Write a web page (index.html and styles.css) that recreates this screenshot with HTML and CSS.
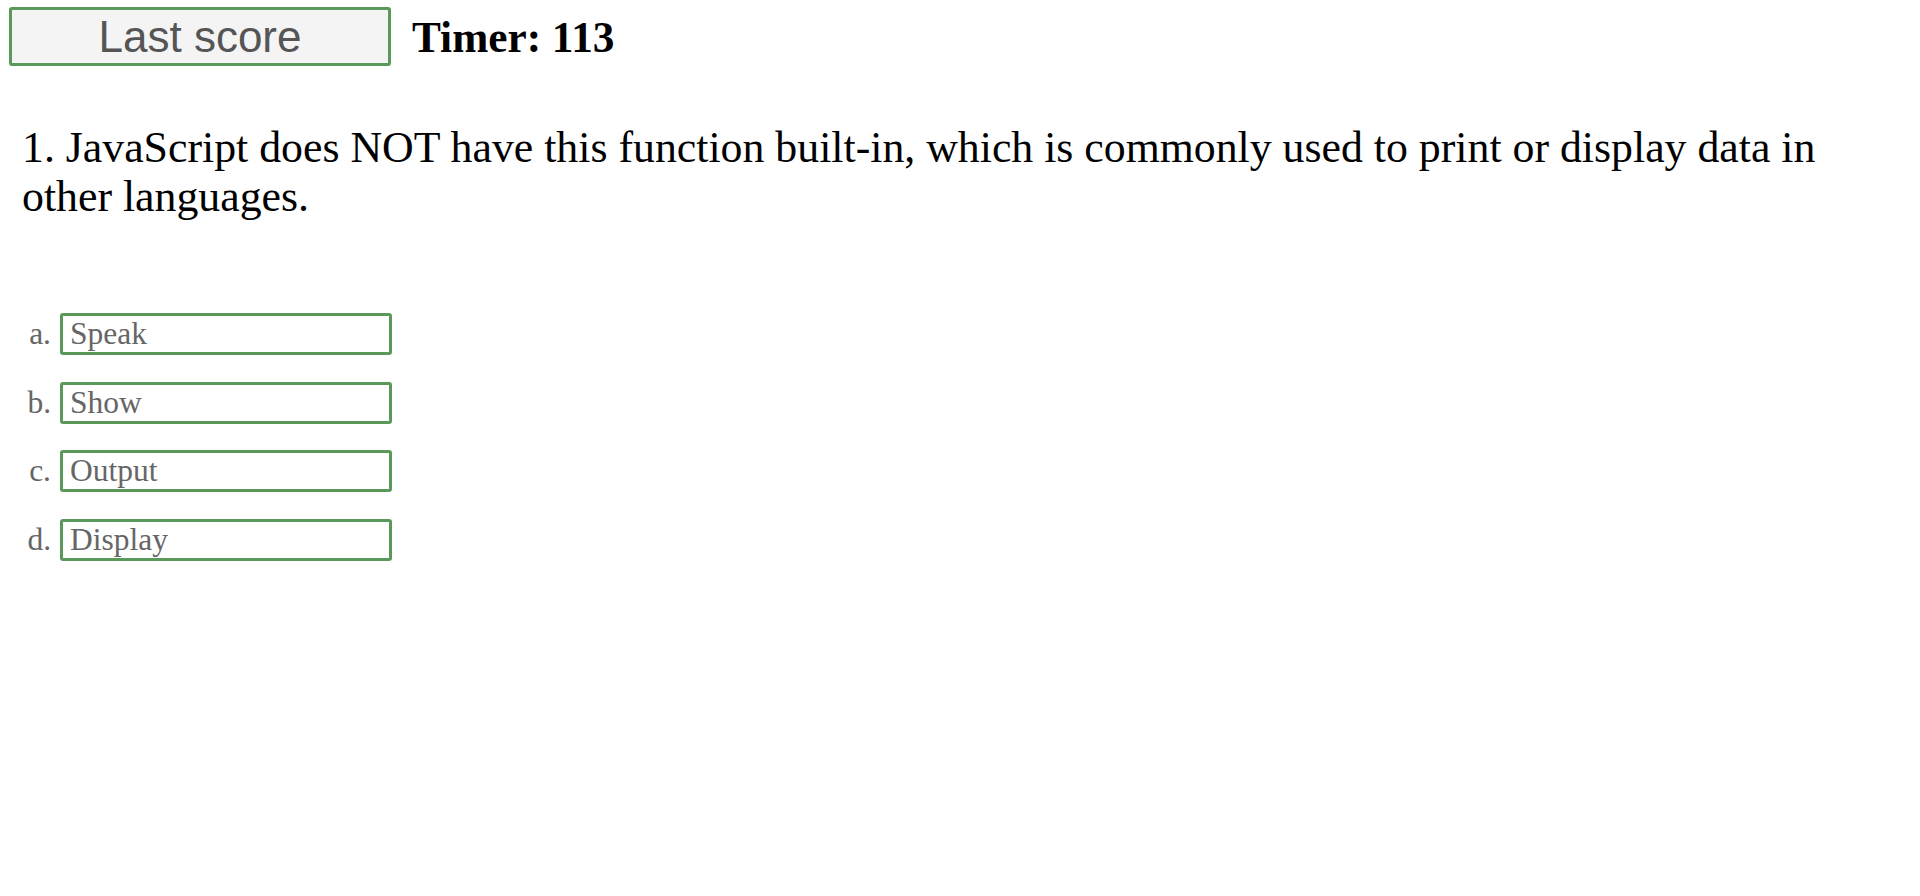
FILE: index.html
```html
<!DOCTYPE html>
<html lang="en">
<head>
<meta charset="utf-8">
<title>Quiz</title>
<link rel="stylesheet" href="styles.css">
</head>
<body>
<header class="header">
  <button class="score-btn" type="button">Last score</button>
  <div class="timer">Timer: 113</div>
</header>
<main class="quiz">
  <p class="question">1. JavaScript does NOT have this function built-in, which is commonly used to print or display data in other languages.</p>
  <ol class="answers">
    <li class="answer-row"><span class="answer-label">a.</span><button class="answer" type="button">Speak</button></li>
    <li class="answer-row"><span class="answer-label">b.</span><button class="answer" type="button">Show</button></li>
    <li class="answer-row"><span class="answer-label">c.</span><button class="answer" type="button">Output</button></li>
    <li class="answer-row"><span class="answer-label">d.</span><button class="answer" type="button">Display</button></li>
  </ol>
</main>
</body>
</html>
```

FILE: styles.css
```css
html, body {
  margin: 0;
  padding: 0;
  background: #ffffff;
}

body {
  font-family: "Liberation Serif", "Times New Roman", serif;
  color: #000;
}

.header {
  display: flex;
  align-items: center;
  gap: 21px;
  padding: 7px 0 0 9px;
}

.score-btn {
  box-sizing: border-box;
  width: 382px;
  height: 59px;
  margin: 0;
  padding: 0;
  border: 3px solid #5a995a;
  border-radius: 3px;
  background: #f4f4f4;
  color: #555555;
  font-family: "Liberation Sans", Arial, sans-serif;
  font-size: 44px;
  line-height: 53px;
  text-align: center;
}

.timer {
  font-weight: bold;
  font-size: 43.3px;
  line-height: 48px;
}

.quiz {
  padding: 0 22px;
}

.question {
  max-width: 1840px;
  margin: 57px 0 0;
  font-size: 43.8px;
  line-height: 49px;
}

.answers {
  list-style: none;
  margin: 92px 0 0;
  padding: 0;
  display: flex;
  flex-direction: column;
  gap: 26.6px;
}

.answer-row {
  display: flex;
  align-items: center;
  gap: 9px;
}

.answer-label {
  width: 29px;
  text-align: right;
  font-size: 31.5px;
  color: #666666;
}

.answer {
  box-sizing: border-box;
  width: 332px;
  height: 42px;
  margin: 0;
  padding: 0 0 0 7px;
  border: 3px solid #5a995a;
  border-radius: 3px;
  background: #ffffff;
  color: #666666;
  font-family: "Liberation Serif", "Times New Roman", serif;
  font-size: 31.5px;
  line-height: 36px;
  text-align: left;
}
```
